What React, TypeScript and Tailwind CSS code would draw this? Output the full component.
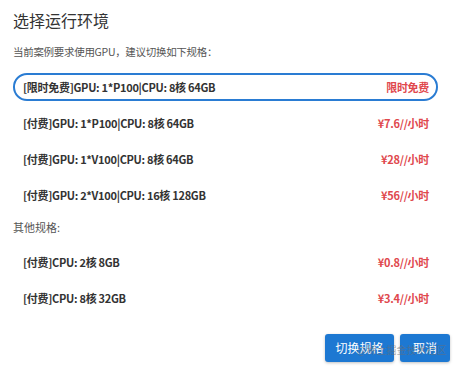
const font = { fontFamily: '"Noto Sans CJK SC", "Liberation Sans", sans-serif' }

const gpuSpecs = [
  { name: '[付费]GPU: 1*P100|CPU: 8核 64GB', price: '¥7.6//小时' },
  { name: '[付费]GPU: 1*V100|CPU: 8核 64GB', price: '¥28//小时' },
  { name: '[付费]GPU: 2*V100|CPU: 16核 128GB', price: '¥56//小时' },
]

const otherSpecs = [
  { name: '[付费]CPU: 2核 8GB', price: '¥0.8//小时' },
  { name: '[付费]CPU: 8核 32GB', price: '¥3.4//小时' },
]

function SpecRow({ name, price, active }: { name: string; price: string; active?: boolean }) {
  return (
    <div
      className={
        'flex items-center justify-between h-[28px] pl-[8px] pr-[7px] rounded-full text-[11px] tracking-[-0.3px] font-bold ' +
        (active ? 'border-2 border-[#2a7cd3]' : 'border-2 border-transparent')
      }
    >
      <span className="text-[#333]">{name}</span>
      <span className="text-[#e0484d]">{price}</span>
    </div>
  )
}

export default function App() {
  return (
    <div className="relative w-[453px] h-[367px] bg-white overflow-hidden" style={font}>
      <div className="px-[13px] pt-[8px]">
        {/* 标题 */}
        <div className="text-[16px] leading-[24px] text-[#333]">选择运行环境</div>
        <div className="mt-[11px] text-[10.5px] leading-[18px] tracking-[-0.3px] text-[#555]">
          当前案例要求使用GPU，建议切换如下规格：
        </div>

        {/* GPU 规格 */}
        <div className="mt-[12px] w-[425px] flex flex-col gap-[8px]">
          <SpecRow name="[限时免费]GPU: 1*P100|CPU: 8核 64GB" price="限时免费" active />
          {gpuSpecs.map((s) => (
            <SpecRow key={s.name} name={s.name} price={s.price} />
          ))}
        </div>

        <div className="mt-[9px] text-[11px] leading-[18px] text-[#555]">其他规格:</div>

        <div className="mt-[12px] w-[425px] flex flex-col gap-[8px]">
          {otherSpecs.map((s) => (
            <SpecRow key={s.name} name={s.name} price={s.price} />
          ))}
        </div>
      </div>

      {/* 按钮 */}
      <div className="absolute left-[325px] top-[334px] flex gap-[6px]">
        <button className="w-[69px] h-[28px] rounded-[3px] bg-[#1d78d2] text-white text-[12px] shadow-[0_1px_3px_rgba(0,0,0,0.25)]">
          切换规格
        </button>
        <button className="w-[50px] h-[28px] rounded-[3px] bg-[#1d78d2] text-white text-[12px] shadow-[0_1px_3px_rgba(0,0,0,0.25)]">
          取消
        </button>
      </div>

      <div className="absolute left-[357px] top-[343px] text-[10px] leading-[14px] text-[rgba(110,110,110,0.55)] pointer-events-none">
        @稀土掘金技术社区
      </div>
    </div>
  )
}
